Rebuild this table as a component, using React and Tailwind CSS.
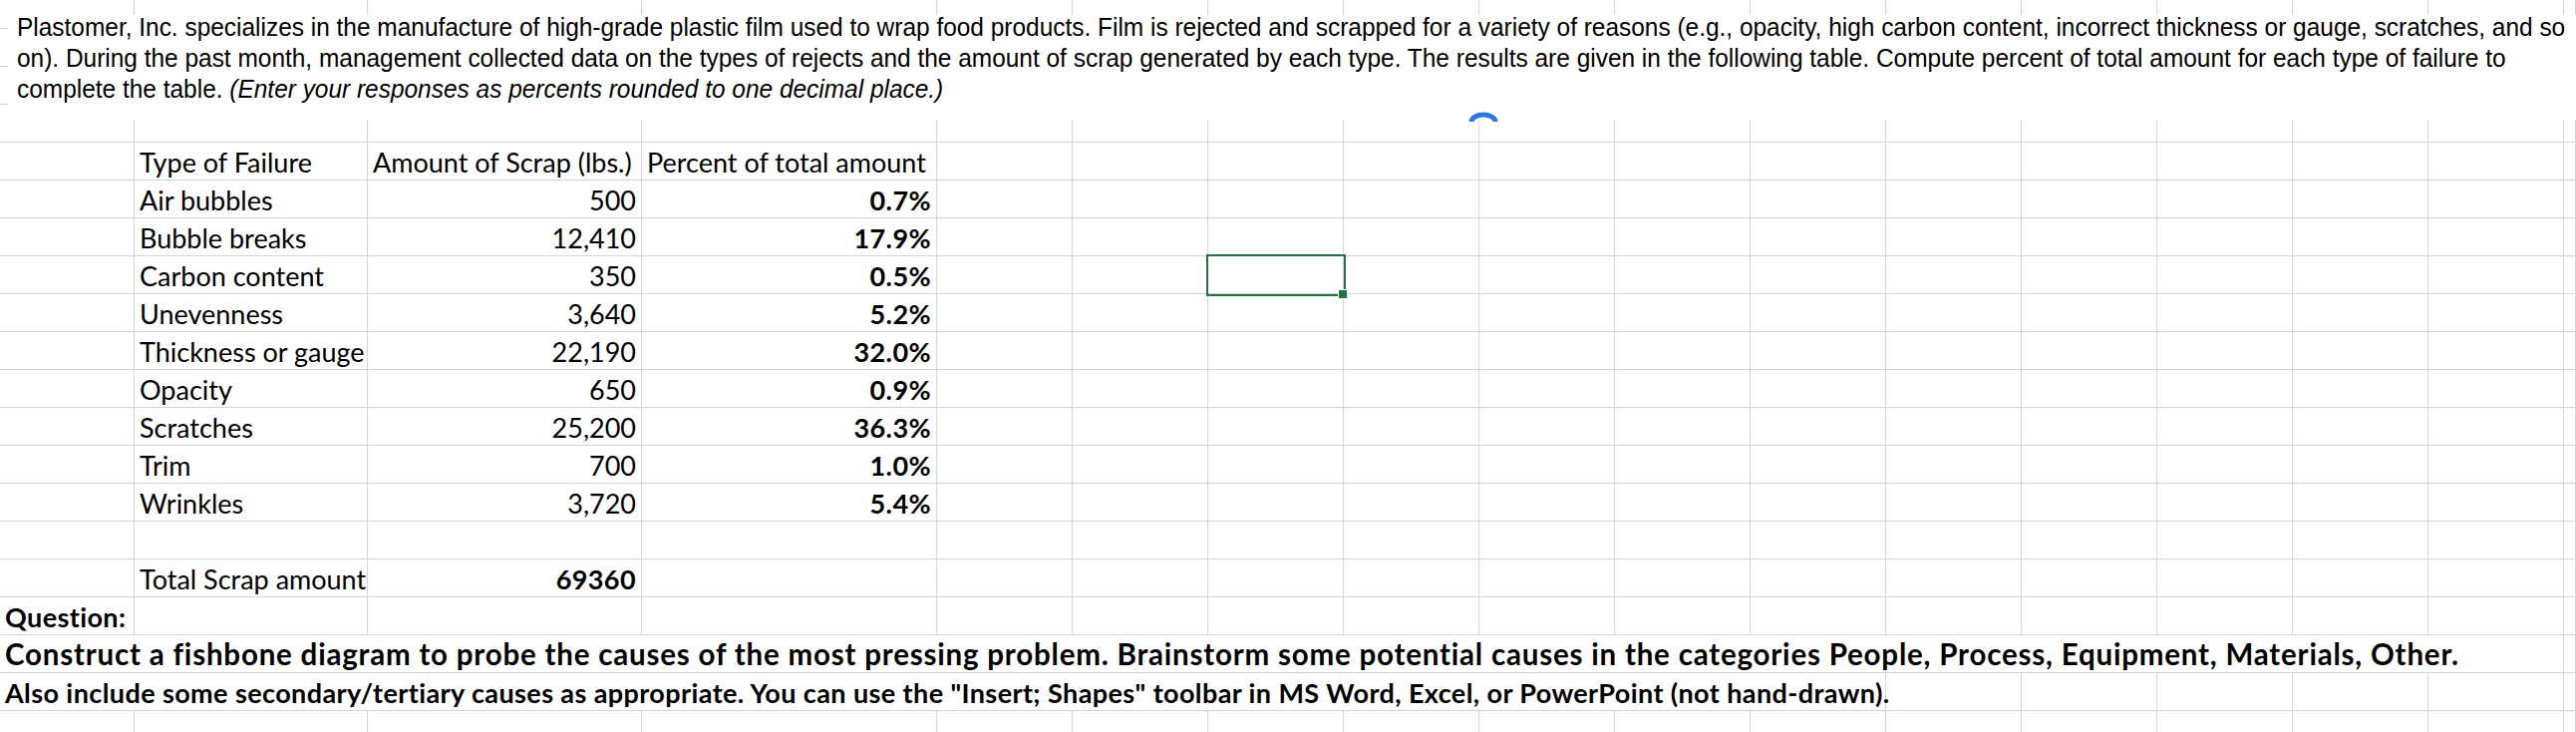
const GRID = "grid grid-cols-[135px_234px_275px_296px_repeat(12,136px)_12px]";

const failures = [
  ["Air bubbles", "500", "0.7%"],
  ["Bubble breaks", "12,410", "17.9%"],
  ["Carbon content", "350", "0.5%"],
  ["Unevenness", "3,640", "5.2%"],
  ["Thickness or gauge", "22,190", "32.0%"],
  ["Opacity", "650", "0.9%"],
  ["Scratches", "25,200", "36.3%"],
  ["Trim", "700", "1.0%"],
  ["Wrinkles", "3,720", "5.4%"],
];

// one spreadsheet cell; text sits on the bottom like Excel does
const Cell = ({ text, right, bold, span = "", size = "text-[27px]" }) => (
  <div
    className={`flex items-end h-full border-r border-b border-[#d4d4d4] px-[5px] pb-[4px] whitespace-nowrap leading-none ${span} ${size} ${
      right ? "justify-end" : "justify-start"
    } ${bold ? "font-bold tracking-[0.4px]" : "font-normal"}`}
  >
    {text}
  </div>
);

const Row = ({ cells = [], h = "h-[38px]" }) => {
  const used = cells.reduce((n, c) => n + (c.cols || 1), 0);
  const rest = Array.from({ length: 17 - used });
  return (
    <div className={`${GRID} ${h}`}>
      {cells.map((c, i) => (
        <Cell key={i} {...c} />
      ))}
      {rest.map((_, i) => (
        <Cell key={"e" + i} />
      ))}
    </div>
  );
};

export default function App() {
  return (
    <div className="relative w-[2584px] h-[734px] overflow-hidden bg-white text-black font-[Lato,sans-serif]">
      {/* sheet grid */}
      <Row h="h-[29px]" />
      <Row />
      <Row />
      <Row />
      <Row
        cells={[
          {},
          { text: "Type of Failure" },
          { text: "Amount of Scrap (lbs.)" },
          { text: "Percent of total amount" },
        ]}
      />
      {failures.map(([name, amt, pct]) => (
        <Row
          key={name}
          cells={[{}, { text: name }, { text: amt, right: true }, { text: pct, right: true, bold: true }]}
        />
      ))}
      <Row />
      <Row cells={[{}, { text: "Total Scrap amount" }, { text: "69360", right: true, bold: true }]} />
      <Row cells={[{ text: "Question:", bold: true }]} />
      <Row
        cells={[
          {
            text: "Construct a fishbone diagram to probe the causes of the most pressing problem. Brainstorm some potential causes in the categories People, Process, Equipment, Materials, Other.",
            bold: true,
            span: "col-span-16 !tracking-[0.8px]",
            cols: 16,
            size: "text-[29.5px]",
          },
        ]}
      />
      <Row
        cells={[
          {
            text: 'Also include some secondary/tertiary causes as appropriate. You can use the "Insert; Shapes" toolbar in MS Word, Excel, or PowerPoint (not hand-drawn).',
            bold: true,
            span: "col-span-11",
            cols: 11,
          },
        ]}
      />
      <Row />

      {/* problem text box laid over the sheet */}
      <div className="absolute left-[8px] top-[15px] w-[2576px] h-[105px] bg-white pl-[9px]">
        <div className="-mt-[3px] origin-left scale-x-[0.94] w-[2800px] font-['Liberation_Sans',Arial,sans-serif] text-[26px] leading-[31px] text-black whitespace-nowrap">
          <div>
            Plastomer, Inc. specializes in the manufacture of high-grade plastic film used to wrap food products. Film is rejected and scrapped for a variety of reasons (e.g., opacity, high carbon content, incorrect thickness or gauge, scratches, and so
          </div>
          <div>
            on). During the past month, management collected data on the types of rejects and the amount of scrap generated by each type. The results are given in the following table. Compute percent of total amount for each type of failure to
          </div>
          <div>
            complete the table. <i>(Enter your responses as percents rounded to one decimal place.)</i>
          </div>
        </div>
      </div>

      {/* text box handle peeking below */}
      <svg className="absolute left-[1473px] top-[111px]" width="30" height="11" viewBox="0 0 30 11">
        <path d="M3 11 A12 7 0 0 1 27 11" fill="none" stroke="#2a78e0" strokeWidth="5" />
      </svg>

      {/* active cell */}
      <div className="absolute left-[1210px] top-[255px] w-[140px] h-[42px] border-2 border-[#217346]" />
      <div className="absolute left-[1342px] top-[290px] w-[10px] h-[10px] bg-[#217346] border border-white" />
    </div>
  );
}
